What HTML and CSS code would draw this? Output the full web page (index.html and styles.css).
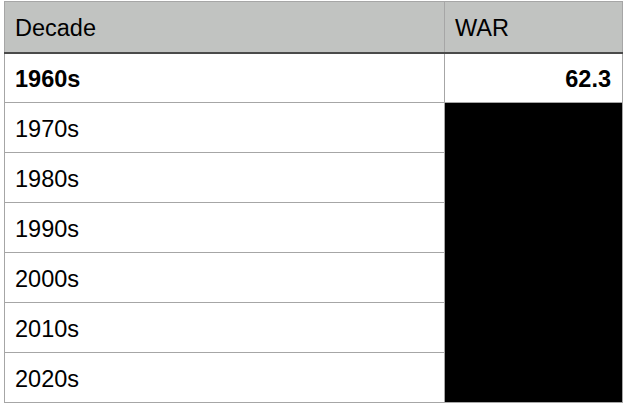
FILE: index.html
```html
<!DOCTYPE html>
<html>
<head>
<meta charset="utf-8">
<link rel="stylesheet" href="styles.css">
</head>
<body>
<table class="grid">
  <thead>
    <tr><th class="c1">Decade</th><th class="c2">WAR</th></tr>
  </thead>
  <tbody>
    <tr class="bold"><td>1960s</td><td class="num">62.3</td></tr>
    <tr><td>1970s</td><td class="blk" rowspan="6"></td></tr>
    <tr><td>1980s</td></tr>
    <tr><td>1990s</td></tr>
    <tr><td>2000s</td></tr>
    <tr><td>2010s</td></tr>
    <tr><td>2020s</td></tr>
  </tbody>
</table>
</body>
</html>
```
FILE: styles.css
```css
html, body { margin: 0; padding: 0; background: #fff; }
body { padding: 1px 0 0 4px; }
.grid {
  border-collapse: collapse;
  font-family: "Liberation Sans", Arial, sans-serif;
  font-size: 23.5px;
  color: #000;
  table-layout: fixed;
  width: 618px;
}
.grid th, .grid td {
  border: 1px solid #a6a6a6;
  height: 50px;
  padding: 3px 11px 0 10px;
  box-sizing: border-box;
  vertical-align: middle;
}
.grid th {
  background: #c1c3c1;
  font-weight: normal;
  text-align: left;
  height: 51px;
  border-bottom: 2px solid #4a4a4a;
}
.c1 { width: 440px; }
.c2 { width: 178px; }
.bold td { font-weight: bold; }
.num { text-align: right; }
.blk { background: #000; border-color: #000; }
```
